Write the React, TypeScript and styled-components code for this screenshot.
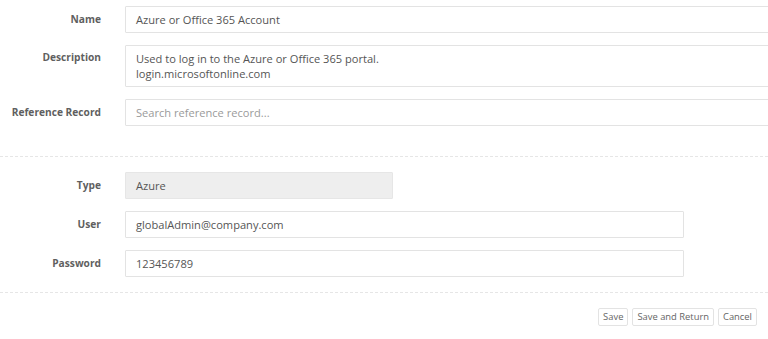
import React from "react";
import styled, { createGlobalStyle } from "styled-components";

const Global = createGlobalStyle`
  html, body { margin: 0; padding: 0; background: #fff; overflow: hidden; }
  body { font-family: "Open Sans", "Noto Sans", sans-serif; }
  * { box-sizing: border-box; }
`;

const Page = styled.div`
  width: 768px;
  height: 339px;
  padding-top: 6px;
  overflow: hidden;
`;

const Section = styled.div<{ $pt?: number; $pb?: number }>`
  display: flex;
  flex-direction: column;
  gap: 12px;
  padding: ${(p) => `${p.$pt ?? 0}px 0 ${p.$pb ?? 0}px`};
`;

const Row = styled.div<{ $top?: boolean }>`
  display: flex;
  align-items: ${(p) => (p.$top ? "flex-start" : "center")};
  gap: 24px;
`;

const Label = styled.label<{ $top?: boolean }>`
  width: 101px;
  flex: none;
  text-align: right;
  font-size: 10.2px;
  font-weight: 700;
  color: #5f5f5f;
  line-height: 15px;
  padding-top: ${(p) => (p.$top ? "5px" : "0")};
  white-space: nowrap;
`;

const Field = styled.div<{ $w: number; $h?: number; $disabled?: boolean; $placeholder?: boolean }>`
  width: ${(p) => p.$w}px;
  height: ${(p) => p.$h ?? 27}px;
  flex: none;
  border: 1px solid ${(p) => (p.$disabled ? "#e6e6e6" : "#e3e3e3")};
  background: ${(p) => (p.$disabled ? "#eeeeee" : "#fff")};
  border-radius: 1px;
  padding: ${(p) => (p.$h ? "5px 10px" : "0 10px")};
  display: flex;
  align-items: ${(p) => (p.$h ? "flex-start" : "center")};
  font-size: 11.1px;
  line-height: 15px;
  color: ${(p) => (p.$placeholder ? "#9a9a9a" : "#555")};
  white-space: pre-line;
`;

const Divider = styled.div`
  height: 0;
  border-top: 1px dashed #e6e6e6;
`;

const Actions = styled.div`
  display: flex;
  justify-content: flex-end;
  gap: 4px;
  padding: 15px 11px 0 0;
`;

const Button = styled.button`
  height: 18px;
  padding: 0 4px;
  border: 1px solid #e3e3e3;
  border-radius: 2px;
  background: #fff;
  font-family: "Open Sans", "Noto Sans", sans-serif;
  font-size: 9.4px;
  color: #666;
  line-height: 16px;
  cursor: pointer;
`;

export default function App() {
  return (
    <Page>
      <Global />
      <Section $pb={30}>
        <Row>
          <Label>Name</Label>
          <Field $w={680}>Azure or Office 365 Account</Field>
        </Row>
        <Row $top>
          <Label $top>Description</Label>
          <Field $w={680} $h={42}>
            {"Used to log in to the Azure or Office 365 portal.\nlogin.microsoftonline.com"}
          </Field>
        </Row>
        <Row>
          <Label>Reference Record</Label>
          <Field $w={680} $placeholder>Search reference record...</Field>
        </Row>
      </Section>
      <Divider />
      <Section $pt={15} $pb={15}>
        <Row>
          <Label>Type</Label>
          <Field $w={268} $disabled>Azure</Field>
        </Row>
        <Row>
          <Label>User</Label>
          <Field $w={559}>globalAdmin@company.com</Field>
        </Row>
        <Row>
          <Label>Password</Label>
          <Field $w={559}>123456789</Field>
        </Row>
      </Section>
      <Divider />
      <Actions>
        <Button>Save</Button>
        <Button>Save and Return</Button>
        <Button>Cancel</Button>
      </Actions>
    </Page>
  );
}
